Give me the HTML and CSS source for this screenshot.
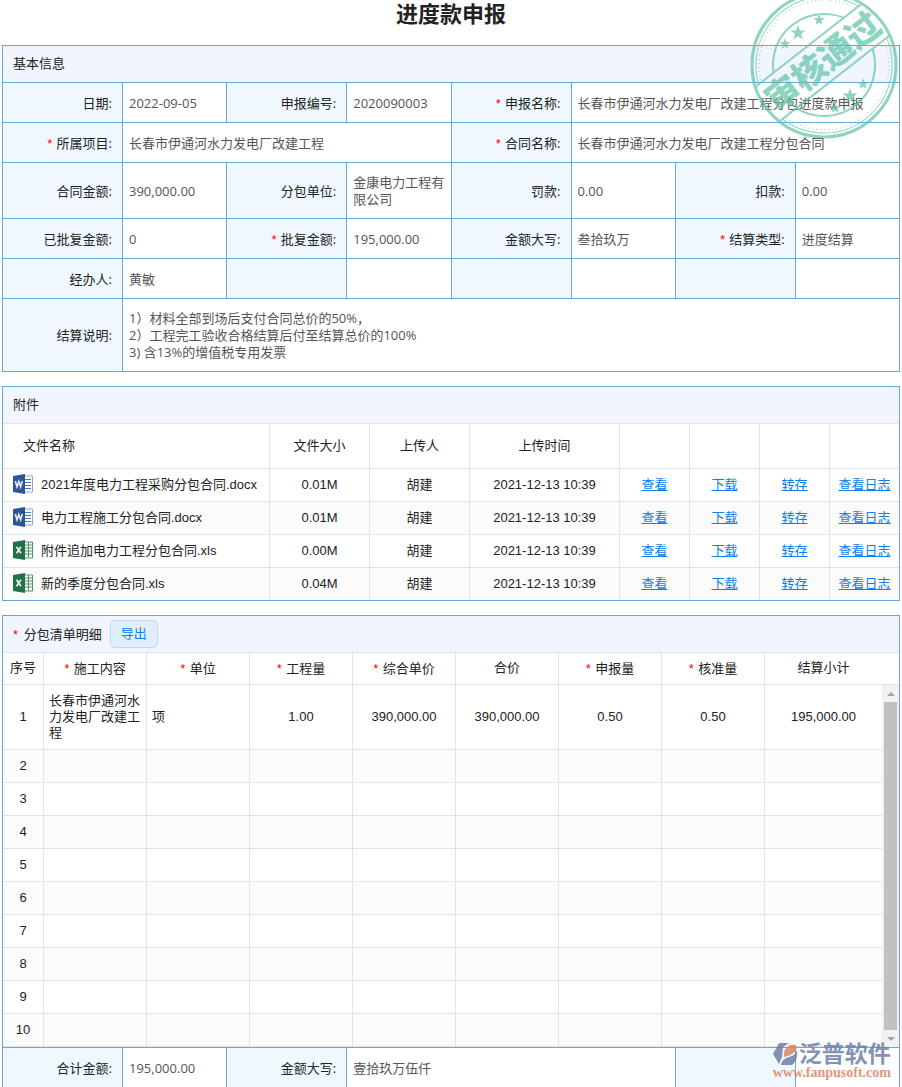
FILE: index.html
```html
<!DOCTYPE html>
<html lang="zh-CN">
<head>
  <meta charset="UTF-8">
  <title>进度款申报</title>
  <link rel="stylesheet" href="styles.css">
</head>
<body>
  <svg class="icon-defs" aria-hidden="true">
    <symbol id="icon-word" viewBox="0 0 20 20">
      <path d="M11 2h8.500v16H11z" fill="#fff" stroke="#8aa6d6"/>
      <path d="M12 5.500h6M12 8.500h6M12 11.500h6M12 14.500h6" stroke="#4f76b8"/>
      <path d="M0 2 12 0v20L0 18z" fill="#2b579a"/>
      <path d="M2.300 7 4 12.800 5.800 7.500 7.600 12.800 9.300 7" fill="none" stroke="#e6edf8" stroke-width="1.600"/>
    </symbol>
    <symbol id="icon-excel" viewBox="0 0 20 20">
      <path d="M11 2h8.500v16H11z" fill="#fff" stroke="#4c9168"/>
      <path d="M12 5h7M12 8h7M12 11h7M12 14h7M15.500 2.500v15" stroke="#4c9168"/>
      <path d="M0 2 12 0v20L0 18z" fill="#217346"/>
      <path d="m3.500 6.800 4.400 6.400m0-6.400-4.400 6.400" fill="none" stroke="#e8f3ec" stroke-width="1.700"/>
    </symbol>
    <symbol id="star" viewBox="-10 -10 20 20">
      <path d="M0-10 2.400-3.200 9.500-3.100 3.800 1.200 5.900 8.100 0 4 -5.900 8.100 -3.800 1.200 -9.500-3.100 -2.400-3.200z"/>
    </symbol>
  </svg>

  <main class="page">
    <h1>进度款申报</h1>

    <table class="info">
      <colgroup>
        <col class="col-label"><col><col class="col-label"><col>
        <col class="col-label"><col><col class="col-label"><col>
      </colgroup>
      <tbody>
        <tr class="row-title"><td colspan="8">基本信息</td></tr>
        <tr>
          <th>日期:</th><td>2022-09-05</td>
          <th>申报编号:</th><td>2020090003</td>
          <th><i>*</i> 申报名称:</th><td colspan="3">长春市伊通河水力发电厂改建工程分包进度款申报</td>
        </tr>
        <tr>
          <th><i>*</i> 所属项目:</th><td colspan="3">长春市伊通河水力发电厂改建工程</td>
          <th><i>*</i> 合同名称:</th><td colspan="3">长春市伊通河水力发电厂改建工程分包合同</td>
        </tr>
        <tr class="row-tall">
          <th>合同金额:</th><td>390,000.00</td>
          <th>分包单位:</th><td>金康电力工程有限公司</td>
          <th>罚款:</th><td>0.00</td>
          <th>扣款:</th><td>0.00</td>
        </tr>
        <tr>
          <th>已批复金额:</th><td>0</td>
          <th><i>*</i> 批复金额:</th><td>195,000.00</td>
          <th>金额大写:</th><td>叁拾玖万</td>
          <th><i>*</i> 结算类型:</th><td>进度结算</td>
        </tr>
        <tr>
          <th>经办人:</th><td>黄敏</td>
          <th></th><td></td>
          <th></th><td></td>
          <th></th><td></td>
        </tr>
        <tr class="row-note">
          <th>结算说明:</th>
          <td colspan="7">1）材料全部到场后支付合同总价的50%，<br>2）工程完工验收合格结算后付至结算总价的100%<br>3) 含13%的增值税专用发票</td>
        </tr>
      </tbody>
    </table>

    <section class="panel">
      <h2>附件</h2>
      <table class="grid files">
        <colgroup>
          <col><col class="col-size"><col class="col-size"><col class="col-time">
          <col class="col-link"><col class="col-link"><col class="col-link"><col class="col-log">
        </colgroup>
        <thead>
          <tr>
            <th>文件名称</th><th>文件大小</th><th>上传人</th><th>上传时间</th>
            <th></th><th></th><th></th><th></th>
          </tr>
        </thead>
        <tbody>
          <tr>
            <td><span class="file"><svg><use href="#icon-word"/></svg>2021年度电力工程采购分包合同.docx</span></td>
            <td>0.01M</td><td>胡建</td><td>2021-12-13 10:39</td>
            <td><a href="#">查看</a></td><td><a href="#">下载</a></td><td><a href="#">转存</a></td><td><a href="#">查看日志</a></td>
          </tr>
          <tr>
            <td><span class="file"><svg><use href="#icon-word"/></svg>电力工程施工分包合同.docx</span></td>
            <td>0.01M</td><td>胡建</td><td>2021-12-13 10:39</td>
            <td><a href="#">查看</a></td><td><a href="#">下载</a></td><td><a href="#">转存</a></td><td><a href="#">查看日志</a></td>
          </tr>
          <tr>
            <td><span class="file"><svg><use href="#icon-excel"/></svg>附件追加电力工程分包合同.xls</span></td>
            <td>0.00M</td><td>胡建</td><td>2021-12-13 10:39</td>
            <td><a href="#">查看</a></td><td><a href="#">下载</a></td><td><a href="#">转存</a></td><td><a href="#">查看日志</a></td>
          </tr>
          <tr>
            <td><span class="file"><svg><use href="#icon-excel"/></svg>新的季度分包合同.xls</span></td>
            <td>0.04M</td><td>胡建</td><td>2021-12-13 10:39</td>
            <td><a href="#">查看</a></td><td><a href="#">下载</a></td><td><a href="#">转存</a></td><td><a href="#">查看日志</a></td>
          </tr>
        </tbody>
      </table>
    </section>

    <section class="panel detail-panel">
      <h2><span><i>*</i> 分包清单明细</span><button type="button">导出</button></h2>
      <table class="grid detail">
        <colgroup>
          <col class="col-no"><col class="col-item"><col class="col-item"><col class="col-item"><col class="col-item">
          <col class="col-item"><col class="col-item"><col class="col-item"><col><col class="col-bar">
        </colgroup>
        <thead>
          <tr>
            <th>序号</th>
            <th class="required"><i>*</i> 施工内容</th>
            <th class="required"><i>*</i> 单位</th>
            <th class="required"><i>*</i> 工程量</th>
            <th class="required"><i>*</i> 综合单价</th>
            <th>合价</th>
            <th class="required"><i>*</i> 申报量</th>
            <th class="required"><i>*</i> 核准量</th>
            <th>结算小计</th>
            <th></th>
          </tr>
        </thead>
        <tbody>
          <tr class="row-first">
            <td>1</td><td class="left">长春市伊通河水力发电厂改建工程</td><td class="left">项</td><td>1.00</td><td>390,000.00</td><td>390,000.00</td><td>0.50</td><td>0.50</td><td>195,000.00</td>
            <td class="bar" rowspan="10"><div class="scrollbar"><span class="arrow up"></span><span class="thumb"></span><span class="arrow down"></span></div></td>
          </tr>
          <tr><td>2</td><td></td><td></td><td></td><td></td><td></td><td></td><td></td><td></td></tr>
          <tr><td>3</td><td></td><td></td><td></td><td></td><td></td><td></td><td></td><td></td></tr>
          <tr><td>4</td><td></td><td></td><td></td><td></td><td></td><td></td><td></td><td></td></tr>
          <tr><td>5</td><td></td><td></td><td></td><td></td><td></td><td></td><td></td><td></td></tr>
          <tr><td>6</td><td></td><td></td><td></td><td></td><td></td><td></td><td></td><td></td></tr>
          <tr><td>7</td><td></td><td></td><td></td><td></td><td></td><td></td><td></td><td></td></tr>
          <tr><td>8</td><td></td><td></td><td></td><td></td><td></td><td></td><td></td><td></td></tr>
          <tr><td>9</td><td></td><td></td><td></td><td></td><td></td><td></td><td></td><td></td></tr>
          <tr><td>10</td><td></td><td></td><td></td><td></td><td></td><td></td><td></td><td></td></tr>
        </tbody>
      </table>
    </section>

    <table class="info total">
      <colgroup>
        <col class="col-label"><col><col class="col-label"><col>
        <col class="col-label"><col><col class="col-label"><col>
      </colgroup>
      <tbody>
        <tr>
          <th>合计金额:</th><td>195,000.00</td>
          <th>金额大写:</th><td colspan="3">壹拾玖万伍仟</td>
          <th></th><td></td>
        </tr>
      </tbody>
    </table>

    <svg class="stamp" viewBox="-75 -75 150 150" role="img" aria-label="审核通过">
      <defs>
        <clipPath id="stamp-top"><path d="M-75-75H75V-25H-75z"/></clipPath>
        <clipPath id="stamp-bottom"><path d="M-75 17H75V75H-75z"/></clipPath>
      </defs>
      <circle r="72" class="ring-thick"/>
      <g transform="rotate(-38)">
        <g clip-path="url(#stamp-top)">
          <circle r="68" class="ring-thin"/>
          <circle r="65" class="ring-dots"/>
          <circle r="51" class="ring-inner"/>
        </g>
        <g clip-path="url(#stamp-bottom)">
          <circle r="68" class="ring-thin"/>
          <circle r="65" class="ring-dots"/>
          <circle r="51" class="ring-inner"/>
        </g>
        <path d="M-67-25H67M-69 17H69" class="ring-inner"/>
        <text x="1" y="9" text-anchor="middle">审核通过</text>
      </g>
      <use href="#star" x="-34" y="-40" width="16" height="16"/>
      <use href="#star" x="-45" y="-27" width="12" height="12"/>
      <use href="#star" x="-11" y="-51" width="12" height="12"/>
      <use href="#star" x="18" y="23" width="16" height="16"/>
      <use href="#star" x="33" y="13" width="12" height="12"/>
      <use href="#star" x="5" y="37" width="12" height="12"/>
    </svg>

    <div class="brand">
      <div class="brand-name">
        <svg viewBox="0 0 26 24">
          <path d="M6 1h10L10 5 9 15 6 22 0 12z" fill="#6f80a6"/>
          <path d="M11 15c-1-8 4-13 12-12 2 6-3 10-12 12z" fill="#dd8465"/>
          <path d="M8 23c1-5 4-7 8-8 4-1 7-3 8-7 1 7-1 12-5 15z" fill="#6f80a6"/>
        </svg>
        <span>泛普软件</span>
      </div>
      <div class="brand-url">www.fanpusoft.com</div>
    </div>
  </main>
</body>
</html>
```
FILE: styles.css
```css
body {
  margin: 0;
  background: #fff;
  color: #222;
  font-family: "Liberation Sans", "Noto Sans CJK SC", sans-serif;
  font-size: 13px;
  line-height: 17px;
}
.icon-defs {
  display: none;
}
.page {
  position: relative;
  padding: 0 2px;
}
i {
  margin-right: 1px;
  color: #f00;
  font-family: "Liberation Sans", sans-serif;
  font-style: normal;
}
h1 {
  margin: 0;
  height: 45px;
  font-size: 22px;
  line-height: 30px;
  font-weight: bold;
  text-align: center;
}

/* label / value form */
table {
  width: 100%;
  table-layout: fixed;
  border-collapse: collapse;
}
.info {
  font-family: "Open Sans", "Noto Sans CJK SC", sans-serif;
}
.info th, .info td {
  height: 39px;
  padding: 1px 6px 0;
  border: 1px solid #6aa6d6;
  box-sizing: border-box;
}
.info th {
  padding-right: 10px;
  background: #f0f8ff;
  font-weight: normal;
  text-align: right;
}
.info td {
  color: #555;
}
.info tr {
  height: 40px;
}
.info .row-title {
  height: 37px;
}
.info .row-title td {
  height: 37px;
  padding: 0 10px 2px;
  background: #f1f5ff;
  color: #222;
}
.info .row-tall {
  height: 56px;
}
.info .row-note {
  height: 73px;
}
.col-label {
  width: 120px;
}

/* panels */
.panel {
  margin-top: 14px;
  border: 1px solid #6aa6d6;
}
.panel h2 {
  display: flex;
  align-items: center;
  gap: 8px;
  height: 34px;
  margin: 0;
  padding: 0 10px 2px;
  background: #f1f5ff;
  border-bottom: 1px solid #e3e3e3;
  font-size: 13px;
  font-weight: normal;
}
.panel button {
  width: 48px;
  height: 28px;
  padding: 0 0 2px;
  border: 1px solid #c3daec;
  border-radius: 5px;
  background: #dfeffd;
  color: #0b80ee;
  font: inherit;
}
.grid {
  border-collapse: separate;
  border-spacing: 0;
}
.grid th, .grid td {
  height: 33px;
  padding: 0 5px 2px;
  border-right: 1px solid #e3e3e3;
  border-bottom: 1px solid #e3e3e3;
  box-sizing: border-box;
  font-weight: normal;
  text-align: center;
}
.grid th:last-child, .grid td:last-child {
  border-right: 0;
}
.grid tbody tr:nth-child(even) {
  background: #fbfbfb;
}
.grid a {
  color: #0b80ee;
}
.files th {
  height: 45px;
}
.files th:first-child {
  padding-left: 20px;
  text-align: left;
}
.files tbody tr:last-child td {
  height: 32px;
  border-bottom: 0;
}
.file {
  display: flex;
  align-items: center;
  gap: 8px;
  padding-left: 5px;
  white-space: nowrap;
}
.file svg {
  width: 20px;
  height: 20px;
}
.col-size {
  width: 100px;
}
.col-time {
  width: 150px;
}
.col-link {
  width: 70px;
}
.col-log {
  width: 69px;
}

/* detail list */
.detail-panel {
  border-bottom: 0;
}
.detail-panel h2 {
  height: 36px;
  padding-bottom: 0;
}
.detail-panel h2 i {
  margin-right: 2px;
}
.detail th {
  height: 32px;
}
.detail .required {
  padding-bottom: 0;
}
.detail .left {
  padding-bottom: 0;
  text-align: left;
  line-height: 16px;
}
.detail .row-first td {
  height: 65px;
}
.detail th:nth-last-child(2), .detail .row-first td:nth-last-child(2), .detail tr:not(.row-first) td:last-child {
  border-right: 0;
}
.detail .bar {
  padding: 0;
  border: 0;
  vertical-align: top;
}
.col-no {
  width: 41px;
}
.col-item {
  width: 103px;
}
.col-bar {
  width: 17px;
}
.scrollbar {
  display: flex;
  flex-direction: column;
  align-items: center;
  height: 362px;
  background: #f1f1f1;
}
.thumb {
  flex: 1;
  width: 13px;
  background: #c1c1c1;
}
.arrow {
  display: flex;
  align-items: center;
  justify-content: center;
  height: 17px;
}
.arrow::before {
  content: "";
  border: 4px solid transparent;
}
.up::before {
  border-top: 0;
  border-bottom-color: #a3a3a3;
}
.down::before {
  border-bottom: 0;
  border-top-color: #a3a3a3;
}
.total tr:last-child > * {
  border-bottom: 0;
}

/* approval stamp over the form */
.stamp {
  position: absolute;
  top: -10px;
  right: 3px;
  width: 150px;
  height: 150px;
  overflow: visible;
  fill: #5fc3a6;
  opacity: .7;
  pointer-events: none;
}
.stamp circle, .stamp path {
  stroke: #5fc3a6;
}
.stamp circle {
  fill: none;
}
.stamp .ring-thick {
  stroke-width: 3;
}
.stamp .ring-thin {
  stroke-width: 1;
}
.stamp .ring-dots {
  stroke-width: 1;
  stroke-dasharray: 1 3;
}
.stamp .ring-inner {
  stroke-width: 2;
}
.stamp text {
  font-family: "Noto Sans CJK SC", sans-serif;
  font-size: 34px;
  font-weight: 900;
}

/* brand mark */
.brand {
  position: absolute;
  right: 11px;
  bottom: 8px;
  opacity: .85;
  pointer-events: none;
}
.brand-name {
  display: flex;
  align-items: center;
  color: #6f80a6;
  font-size: 23px;
  line-height: 24px;
  font-weight: bold;
}
.brand-name svg {
  width: 26px;
  height: 24px;
}
.brand-url {
  color: #dd8465;
  font-family: "Liberation Serif", serif;
  font-size: 14px;
  line-height: 14px;
  font-weight: bold;
  text-align: right;
}
```
